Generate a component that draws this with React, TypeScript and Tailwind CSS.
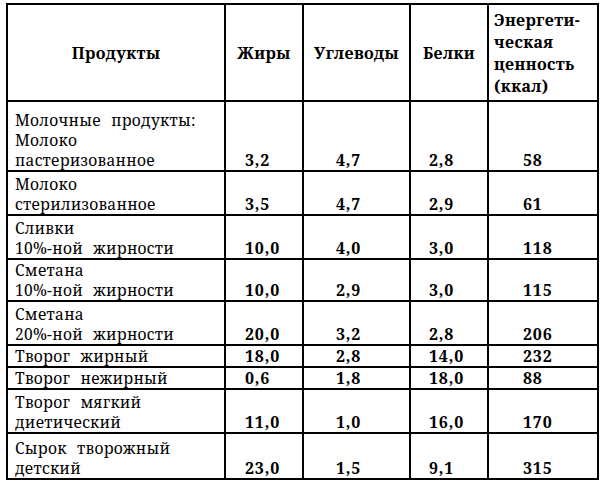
type Row = {
  name: string[];
  fat: string;
  carbs: string;
  protein: string;
  kcal: string;
  h: string;
};

const rows: Row[] = [
  { name: ["Молочные продукты:", "Молоко", "пастеризованное"], fat: "3,2", carbs: "4,7", protein: "2,8", kcal: "58", h: "h-[70px]" },
  { name: ["Молоко", "стерилизованное"], fat: "3,5", carbs: "4,7", protein: "2,9", kcal: "61", h: "h-[44px]" },
  { name: ["Сливки", "10%-ной жирности"], fat: "10,0", carbs: "4,0", protein: "3,0", kcal: "118", h: "h-[44px]" },
  { name: ["Сметана", "10%-ной жирности"], fat: "10,0", carbs: "2,9", protein: "3,0", kcal: "115", h: "h-[42px]" },
  { name: ["Сметана", "20%-ной жирности"], fat: "20,0", carbs: "3,2", protein: "2,8", kcal: "206", h: "h-[44px]" },
  { name: ["Творог жирный"], fat: "18,0", carbs: "2,8", protein: "14,0", kcal: "232", h: "h-[22px]" },
  { name: ["Творог нежирный"], fat: "0,6", carbs: "1,8", protein: "18,0", kcal: "88", h: "h-[22px]" },
  { name: ["Творог мягкий", "диетический"], fat: "11,0", carbs: "1,0", protein: "16,0", kcal: "170", h: "h-[44px]" },
  { name: ["Сырок творожный", "детский"], fat: "23,0", carbs: "1,5", protein: "9,1", kcal: "315", h: "h-[46px]" },
];

const cell =
  "font-['Noto_Serif','DejaVu_Serif','Times_New_Roman',serif] border-2 border-black align-bottom p-0 text-[15.5px] leading-[20px]";
const num = "font-bold text-[16px] tracking-[0.8px]";
const head =
  "font-['Noto_Serif','DejaVu_Serif','Times_New_Roman',serif] border-2 border-black align-middle p-0 font-bold text-[16px] tracking-[0.4px]";

export default function App() {
  return (
    <div className="w-[600px] h-[483px] bg-white pl-[6px] pt-[3px] text-black font-['Noto_Serif','DejaVu_Serif','Times_New_Roman',serif]">
      <table className="table-fixed border-collapse w-[591px] font-['Noto_Serif','DejaVu_Serif','Times_New_Roman',serif]">
        <colgroup>
          <col className="w-[218px]" />
          <col className="w-[78px]" />
          <col className="w-[107px]" />
          <col className="w-[78px]" />
          <col className="w-[110px]" />
        </colgroup>
        <thead>
          <tr className="h-[97px]">
            <th className={`${head} text-center`}>Продукты</th>
            <th className={`${head} text-center`}>Жиры</th>
            <th className={`${head} text-center`}>Углеводы</th>
            <th className={`${head} text-center`}>Белки</th>
            <th className={`${head} text-left pl-[5px] leading-[22px]`}>
              Энергети-
              <br />
              ческая
              <br />
              ценность
              <br />
              (ккал)
            </th>
          </tr>
        </thead>
        <tbody>
          {rows.map((r, i) => (
            <tr key={i} className={r.h}>
              <td className={`${cell} pl-[7px] tracking-[0.3px] [word-spacing:6px]`}>
                {r.name.map((line, j) => (
                  <div key={j} className="whitespace-nowrap">
                    {line}
                  </div>
                ))}
              </td>
              <td className={`${cell} ${num} pl-[19px]`}>{r.fat}</td>
              <td className={`${cell} ${num} pl-[32px]`}>{r.carbs}</td>
              <td className={`${cell} ${num} pl-[18px]`}>{r.protein}</td>
              <td className={`${cell} ${num} pl-[34px]`}>{r.kcal}</td>
            </tr>
          ))}
        </tbody>
      </table>
    </div>
  );
}
